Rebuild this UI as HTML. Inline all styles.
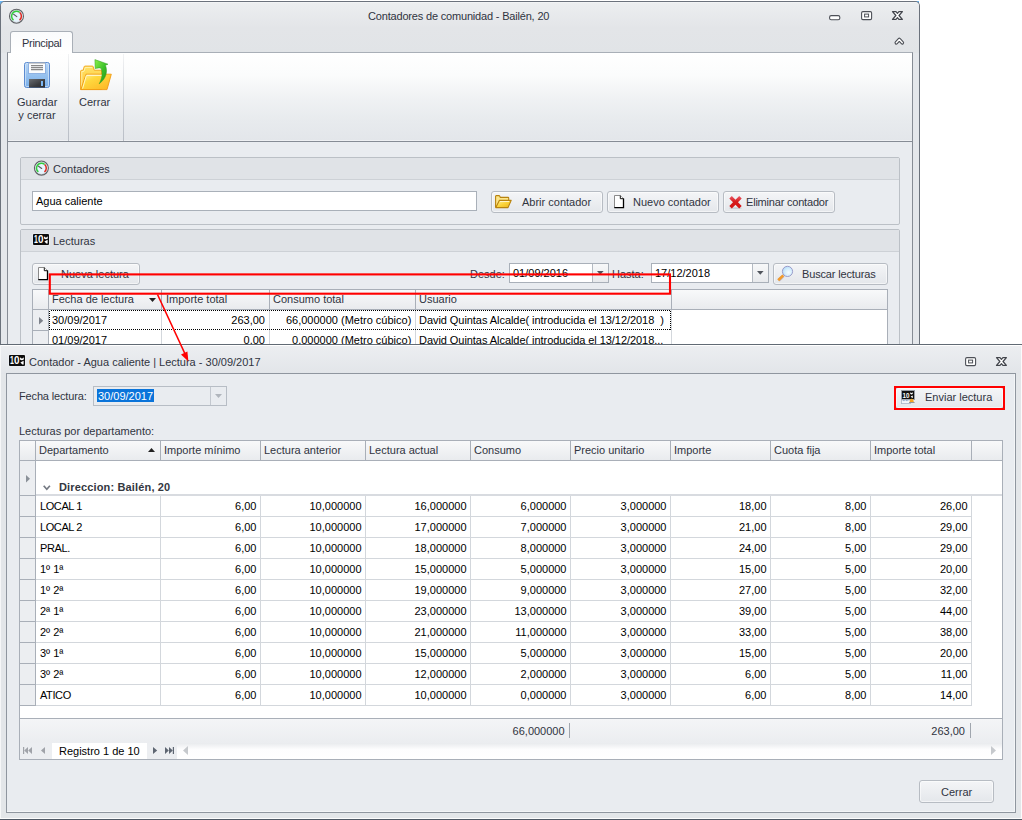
<!DOCTYPE html>
<html><head><meta charset="utf-8"><title>Contadores de comunidad</title>
<style>
*{box-sizing:border-box;margin:0;padding:0}
html,body{width:1022px;height:820px;overflow:hidden;background:#fff}
body{position:relative;font-family:"Liberation Sans",sans-serif;font-size:11px;color:#30343f;line-height:13px}
.a{position:absolute}
.t{position:absolute;white-space:pre;line-height:13px;height:13px}
.blk{color:#000}
.btn{position:absolute;border:1px solid #b7bcc3;border-radius:3px;background:linear-gradient(#f4f5f7,#e4e7eb);box-shadow:inset 0 0 0 1px rgba(255,255,255,.55)}
.inp{position:absolute;border:1px solid #a9b0b9;background:#fff}
.grp{position:absolute;border:1px solid #bbc0c6;border-radius:2px;background:#e9ecf0}
.grph{position:absolute;left:0;right:0;top:0;height:22px;background:#e0e3e7;border-bottom:1px solid #cdd1d6}
.hdr{position:absolute;background:linear-gradient(#f8f9fa,#e9ebee)}
.vl{position:absolute;width:1px;background:#a9afb8}
.hl{position:absolute;height:1px;background:#a9afb8}
.cvl{position:absolute;width:1px;background:#d3d7dc}
.chl{position:absolute;height:1px;background:#d3d7dc}
svg{position:absolute;overflow:visible}
</style></head><body>

<div class="a" style="left:0;top:1px;width:4px;height:4px;background:#6cb5f2"></div><div class="a" style="left:915px;top:1px;width:4px;height:4px;background:#6cb5f2"></div>
<div id="win" class="a" style="left:0;top:1px;width:920px;height:360px;background:#e4e7eb;border:1px solid #6b727c;border-bottom:0;border-radius:5px 5px 0 0;overflow:hidden">
  <div class="a" style="left:0;top:0;width:918px;height:51px;background:linear-gradient(#f8f9fa 0,#eceef0 1px,#e3e5e8 26px,#e1e4e7 51px)"></div>
</div>
<div class="t" style="left:368px;top:10px;letter-spacing:-0.18px">Contadores de comunidad - Bailén, 20</div>
<div class="a" style="left:7px;top:52px;width:906px;height:90px;border:1px solid #868c95;border-top-color:#a9afb7;background:linear-gradient(#ffffff 0,#fbfcfc 25%,#f0f2f4 50%,#e8ebee 75%,#e3e6ea 100%);box-shadow:inset 0 -1px 0 #eef0f3"></div>
<div class="a" style="left:7px;top:141px;width:1px;height:210px;background:#868c95"></div>
<div class="a" style="left:912px;top:141px;width:1px;height:210px;background:#868c95"></div>
<div class="a" style="left:8px;top:142px;width:904px;height:210px;background:#e9ecf0"></div>
<div class="a" style="left:10px;top:31px;width:63px;height:22px;border:1px solid #a9afb7;border-bottom:0;border-radius:3px 3px 0 0;background:linear-gradient(#fafbfc,#ffffff)"></div>
<div class="t" style="left:22px;top:37px;letter-spacing:-0.3px">Principal</div>
<div class="a" style="left:68px;top:54px;width:1px;height:87px;background:linear-gradient(rgba(190,195,202,.2),#b9bec6)"></div>
<div class="a" style="left:123px;top:54px;width:1px;height:87px;background:linear-gradient(rgba(190,195,202,.2),#b9bec6)"></div>
<div class="t" style="left:17px;top:96px;width:40px;text-align:center;height:26px">Guardar
y cerrar</div>
<div class="t" style="left:79px;top:96px;">Cerrar</div>
<div class="grp" style="left:20px;top:157px;width:880px;height:68px"><div class="grph"></div></div>
<div class="t" style="left:53px;top:163px;">Contadores</div>
<div class="inp" style="left:32px;top:191px;width:445px;height:20px;"></div>
<div class="t blk" style="left:36px;top:195px;">Agua caliente</div>
<div class="btn" style="left:491px;top:191px;width:112px;height:22px;"></div>
<div class="t" style="left:522px;top:196px;">Abrir contador</div>
<div class="btn" style="left:607px;top:191px;width:112px;height:22px;"></div>
<div class="t" style="left:633px;top:196px;">Nuevo contador</div>
<div class="btn" style="left:723px;top:191px;width:112px;height:22px;"></div>
<div class="t" style="left:746px;top:196px;letter-spacing:-0.2px">Eliminar contador</div>
<div class="grp" style="left:20px;top:229px;width:880px;height:140px"><div class="grph"></div></div>
<div class="t" style="left:53px;top:235px;">Lecturas</div>
<div class="btn" style="left:32px;top:263px;width:108px;height:22px;"></div>
<div class="t" style="left:61px;top:268px;">Nueva lectura</div>
<div class="t" style="left:470px;top:268px;">Desde:</div>
<div class="inp" style="left:509px;top:263px;width:100px;height:20px;"></div>
<div class="t blk" style="left:513px;top:267px;">01/09/2016</div>
<div class="t" style="left:612px;top:268px;">Hasta:</div>
<div class="inp" style="left:651px;top:263px;width:118px;height:20px;"></div>
<div class="t blk" style="left:655px;top:267px;">17/12/2018</div>
<div class="btn" style="left:773px;top:263px;width:115px;height:22px;"></div>
<div class="t" style="left:802px;top:268px;letter-spacing:-0.15px">Buscar lecturas</div>
<div class="a" style="left:592px;top:264px;width:16px;height:18px;border-left:1px solid #b4bac2;background:linear-gradient(#f7f8f9,#e8eaed)"></div>
<svg style="left:597.2px;top:271.2px" width="8" height="5"><path d="M0 0h6.6l-3.3 3.8z" fill="#50545c"/></svg>
<div class="a" style="left:752px;top:264px;width:16px;height:18px;border-left:1px solid #b4bac2;background:linear-gradient(#f7f8f9,#e8eaed)"></div>
<svg style="left:757.2px;top:271.2px" width="8" height="5"><path d="M0 0h6.6l-3.3 3.8z" fill="#50545c"/></svg>
<div class="a" style="left:32px;top:289px;width:856px;height:70px;border:1px solid #a9afb8;background:#fff"></div>
<div class="hdr" style="left:33px;top:290px;width:854px;height:19px;"></div>
<div class="hl" style="left:33px;top:309px;width:854px;height:1px;"></div>
<div class="a" style="left:33px;top:310px;width:15px;height:50px;background:#eceef1"></div>
<div class="vl" style="left:48px;top:290px;width:1px;height:19px;"></div>
<div class="vl" style="left:161px;top:290px;width:1px;height:19px;"></div>
<div class="vl" style="left:269px;top:290px;width:1px;height:19px;"></div>
<div class="vl" style="left:415px;top:290px;width:1px;height:19px;"></div>
<div class="vl" style="left:671px;top:290px;width:1px;height:19px;"></div>
<div class="vl" style="left:48px;top:310px;width:1px;height:50px;"></div>
<div class="cvl" style="left:161px;top:310px;width:1px;height:50px;"></div>
<div class="cvl" style="left:269px;top:310px;width:1px;height:50px;"></div>
<div class="cvl" style="left:415px;top:310px;width:1px;height:50px;"></div>
<div class="cvl" style="left:671px;top:310px;width:1px;height:50px;"></div>
<div class="hl" style="left:33px;top:330px;width:15px;height:1px;"></div>
<div class="a" style="left:49px;top:310px;width:622px;height:1px;background:repeating-linear-gradient(90deg,#000 0,#000 1px,#fff 1px,#fff 2px)"></div>
<div class="a" style="left:49px;top:329px;width:622px;height:1px;background:repeating-linear-gradient(90deg,#000 0,#000 1px,#fff 1px,#fff 2px)"></div>
<div class="a" style="left:49px;top:310px;width:1px;height:20px;background:repeating-linear-gradient(0deg,#000 0,#000 1px,#fff 1px,#fff 2px)"></div>
<div class="a" style="left:670px;top:310px;width:1px;height:20px;background:repeating-linear-gradient(0deg,#000 0,#000 1px,#fff 1px,#fff 2px)"></div>
<div class="t" style="left:52px;top:293px;">Fecha de lectura</div>
<div class="t" style="left:166px;top:293px;">Importe total</div>
<div class="t" style="left:273px;top:293px;">Consumo total</div>
<div class="t" style="left:419px;top:293px;">Usuario</div>
<svg style="left:148.8px;top:298px" width="8" height="5"><path d="M0 0h7l-3.5 4z" fill="#222"/></svg>
<svg style="left:38.8px;top:316.8px" width="5" height="8"><path d="M0 0l4.2 3.7L0 7.4z" fill="#7d828b"/></svg>
<div class="t blk" style="left:52px;top:314px;">30/09/2017</div>
<div class="t blk" style="left:-35px;width:300px;text-align:right;top:314px;">263,00</div>
<div class="t blk" style="left:111.30000000000001px;width:300px;text-align:right;top:314px;">66,000000 (Metro cúbico)</div>
<div class="t blk" style="left:419px;top:314px;letter-spacing:-0.055px">David Quintas Alcalde( introducida el 13/12/2018  )</div>
<div class="t blk" style="left:52px;top:334px;">01/09/2017</div>
<div class="t blk" style="left:-35px;width:300px;text-align:right;top:334px;">0,00</div>
<div class="t blk" style="left:111.30000000000001px;width:300px;text-align:right;top:334px;">0,000000 (Metro cúbico)</div>
<div class="t blk" style="left:419px;top:334px;letter-spacing:-0.055px">David Quintas Alcalde( introducida el 13/12/2018...</div>
<svg style="left:0;top:0" width="1022" height="820"><circle cx="16.5" cy="16.2" r="7.6" fill="#f4f5f6" opacity=".6"/><circle cx="16.5" cy="16.2" r="6.9" fill="#e6f4fd" stroke="#5f6165" stroke-width="1.3"/><circle cx="16.5" cy="16.2" r="6" fill="none" stroke="#d8dde2" stroke-width=".7"/><path d="M13.48 20.06A4.9 4.9 0 1 1 19.78 12.56" fill="none" stroke="#33cc3c" stroke-width="1.5"/><path d="M19.78 12.56A4.9 4.9 0 0 1 19.52 20.06" fill="none" stroke="#e0281f" stroke-width="1.5"/><line x1="16.8" y1="16.599999999999998" x2="13.6" y2="14.299999999999999" stroke="#5a5c60" stroke-width="1.1" stroke-linecap="round"/></svg>
<svg style="left:0;top:0" width="1022" height="820"><circle cx="41.4" cy="168.1" r="7.6" fill="#f4f5f6" opacity=".6"/><circle cx="41.4" cy="168.1" r="6.9" fill="#e6f4fd" stroke="#5f6165" stroke-width="1.3"/><circle cx="41.4" cy="168.1" r="6" fill="none" stroke="#d8dde2" stroke-width=".7"/><path d="M38.38 171.96A4.9 4.9 0 1 1 44.68 164.46" fill="none" stroke="#33cc3c" stroke-width="1.5"/><path d="M44.68 164.46A4.9 4.9 0 0 1 44.42 171.96" fill="none" stroke="#e0281f" stroke-width="1.5"/><line x1="41.699999999999996" y1="168.5" x2="38.5" y2="166.2" stroke="#5a5c60" stroke-width="1.1" stroke-linecap="round"/></svg>
<svg style="left:24px;top:62px" width="26" height="26" viewBox="0 0 26 26"><defs><linearGradient id="fl1" x1="0" y1="0" x2="0" y2="1"><stop offset="0" stop-color="#b7d6f5"/><stop offset="1" stop-color="#78aee9"/></linearGradient><linearGradient id="fl2" x1="0" y1="0" x2="1" y2="1"><stop offset="0" stop-color="#6a6d72"/><stop offset=".6" stop-color="#3b3c3f"/><stop offset="1" stop-color="#2c2c2e"/></linearGradient></defs><rect x=".5" y=".5" width="25" height="25" rx="2" fill="url(#fl1)" stroke="#5c8bd0"/><rect x="1.5" y="1.5" width="23" height="23" rx="1.2" fill="none" stroke="#d5e7fa" stroke-opacity=".7"/><rect x="4.6" y=".6" width="16.8" height="11" fill="#fbfcfd" stroke="#7fa6dc" stroke-width=".8"/><rect x="5" y=".5" width="16" height="1" fill="#9c9da1"/><rect x="7" y="3.2" width="12" height="1" fill="#6b6b6b"/><rect x="7" y="5.2" width="12" height="1" fill="#6b6b6b"/><rect x="7" y="7.2" width="12" height="1" fill="#6b6b6b"/><rect x="5" y="17" width="16" height="8.6" fill="url(#fl2)"/><rect x="17" y="19" width="2" height="5" fill="#7cb7f3"/></svg>
<svg style="left:80px;top:59px" width="32" height="32" viewBox="0 0 32 32"><defs><linearGradient id="fa1" x1="0" y1="0" x2="0" y2="1"><stop offset="0" stop-color="#ffe36a"/><stop offset="1" stop-color="#ffc22e"/></linearGradient><linearGradient id="fa2" x1="0" y1="0" x2="1" y2="1"><stop offset="0" stop-color="#fff2a0"/><stop offset=".35" stop-color="#ffd83e"/><stop offset="1" stop-color="#fdb321"/></linearGradient><linearGradient id="fa3" x1="0" y1="0" x2="1" y2="1"><stop offset="0" stop-color="#8cf04a"/><stop offset=".5" stop-color="#3cc22a"/><stop offset="1" stop-color="#1f8a14"/></linearGradient></defs><path d="M0.6 30.5V12.2Q0.6 11.4 1.6 11.3L3.2 11.2L4.2 7.6Q4.4 7.1 5 7.1H12.4Q13 7.1 13.2 7.6L14.2 11.2H21.5V30.5z" fill="url(#fa1)" stroke="#f0a010" stroke-width=".9"/><path d="M1.8 29V12.5L4 12.3L5.2 8.4H12.2" fill="none" stroke="#fff6c0" stroke-width=".9" stroke-opacity=".9"/><path d="M6 15.2H31.3L27 30.6H0.8z" fill="url(#fa2)" stroke="#f19a12" stroke-width=".9"/><path d="M6.8 16.3H25" fill="none" stroke="#fffbe0" stroke-width="1"/><path d="M6.4 16.4L2.6 29.6" fill="none" stroke="#fff8d0" stroke-width=".9"/><path d="M14.9 0.6L28 5.2L25.4 6.3C27.6 11.5 27 19 19.2 24.8C21.5 20.5 23.4 14.5 21 9.3C19.6 8.5 17.3 9 15.2 9.6z" fill="url(#fa3)" stroke="#2a9a1c" stroke-width=".5"/></svg>
<svg style="left:494.5px;top:194.5px" width="17" height="14" viewBox="0 0 17 14"><defs><linearGradient id="fs1" x1="0" y1="0" x2="1" y2="1"><stop offset="0" stop-color="#fff0a0"/><stop offset=".5" stop-color="#fbd43a"/><stop offset="1" stop-color="#e9b21c"/></linearGradient></defs><path d="M0.6 12.4V1.3Q0.6 .6 1.3 .6H3.9Q4.5 .6 4.8 1.2L5.3 2.4H13Q13.7 2.4 13.7 3.1V5.2" fill="#fde68a" stroke="#b8830f" stroke-width="1.1"/><path d="M4.3 5.4H16.2L13 12.6H0.8z" fill="url(#fs1)" stroke="#b8830f" stroke-width="1.1" stroke-linejoin="round"/><path d="M5 6.5H14.2" stroke="#fff8d8" stroke-width=".9" fill="none"/></svg>
<svg style="left:614px;top:195px" width="11" height="14" viewBox="0 0 11 14"><path d="M0.5 0.5H6.5L9.5 3.5V12.5H0.5z" fill="#fff" stroke="#8a8a8a" stroke-width="1"/><path d="M6.3 0.6V3.7H9.4" fill="#fff" stroke="#111" stroke-width="1"/><path d="M9.5 3.5V12.6H0.3" fill="none" stroke="#000" stroke-width="1.3"/></svg>
<svg style="left:728.6px;top:195.6px" width="13" height="13" viewBox="0 0 13 13"><defs><linearGradient id="rx1" x1="0" y1="0" x2="0" y2="1"><stop offset="0" stop-color="#ea5a68"/><stop offset=".45" stop-color="#d61c1c"/><stop offset="1" stop-color="#d41414"/></linearGradient></defs><ellipse cx="6.5" cy="12.2" rx="6.5" ry=".9" fill="#b9bcc2" opacity=".6"/><path d="M2.8 0.1L6.5 3.8L10.2 0.1L12.7 2.6L9 6.3L12.7 10L10.2 12.4L6.5 8.8L2.8 12.4L0.3 10L4 6.3L0.3 2.6z" fill="url(#rx1)"/></svg>
<svg style="left:38px;top:267px" width="11" height="14" viewBox="0 0 11 14"><path d="M0.5 0.5H6.5L9.5 3.5V12.5H0.5z" fill="#fff" stroke="#8a8a8a" stroke-width="1"/><path d="M6.3 0.6V3.7H9.4" fill="#fff" stroke="#111" stroke-width="1"/><path d="M9.5 3.5V12.6H0.3" fill="none" stroke="#000" stroke-width="1.3"/></svg>
<svg style="left:777px;top:264px" width="18" height="18" viewBox="0 0 18 18"><defs><radialGradient id="mg1" cx=".6" cy=".6" r=".7"><stop offset="0" stop-color="#f4fcff"/><stop offset=".6" stop-color="#cdeafc"/><stop offset="1" stop-color="#a9d4f7"/></radialGradient></defs><path d="M6.5 11.6L1.6 16.4" stroke="#8a8fb0" stroke-width="3.4" stroke-linecap="butt" opacity=".45"/><path d="M6.3 11.4L1.2 16.2" stroke="#f39a2b" stroke-width="2.6" stroke-linecap="butt"/><circle cx="10.5" cy="7.4" r="5.1" fill="url(#mg1)" stroke="#9b9cca" stroke-width="1"/></svg>
<svg style="left:33px;top:234px" width="16" height="11" viewBox="0 0 16 11"><rect x="-.6" y="-.6" width="17.2" height="12.2" rx="1" fill="#f4f5f7" opacity=".7"/><rect x="0" y="0" width="16" height="11" rx="1" fill="#0c0c0c"/><text transform="translate(1.1,9.4) scale(.68,1)" font-family="Liberation Sans,sans-serif" font-weight="bold" font-size="10.3" fill="#fff">1</text><text transform="translate(4.9,9.4) scale(.96,1)" font-family="Liberation Sans,sans-serif" font-weight="bold" font-size="10.3" fill="#fff">0</text><path d="M11 2.2Q12.9 4.6 14.8 2.2V4.6Q12.9 6 11 4.6z" fill="#fff"/><path d="M11.4 7.6L14.6 5.8V9.6L13.4 9.4z" fill="#fff"/></svg>
<svg style="left:0;top:0" width="1022" height="60"><rect x="829.6" y="15.6" width="10.2" height="4.2" rx="1.6" fill="#fff" stroke="#4d5057" stroke-width="1.1"/><rect x="861.6" y="11.6" width="10" height="8" rx="1.3" fill="#fff" stroke="#4d5057" stroke-width="1.1"/><rect x="864.6" y="14.1" width="4" height="2.8" fill="#fff" stroke="#4d5057" stroke-width="1"/><path d="M892.5 11.6H896L897.45 13.3L898.9 11.6H902.4L899 15.5L902.4 19.4H898.9L897.45 17.7L896 19.4H892.5L895.9 15.5z" fill="#fff" stroke="#43464d" stroke-width="1.25" stroke-linejoin="round"/><path d="M896.3 42.8L899.3 39.5L902.3 42.8" fill="none" stroke="#4d5057" stroke-width="3.6" stroke-linecap="round" stroke-linejoin="round"/><path d="M896.3 42.8L899.3 39.5L902.3 42.8" fill="none" stroke="#fff" stroke-width="1.4" stroke-linecap="round" stroke-linejoin="round"/></svg>
<div id="dlg" class="a" style="left:0;top:344px;width:1022px;height:476px;background:#e3e6e9;border-top:1px solid #616a74;border-bottom:1px solid #4e5864">
  <div class="a" style="left:0;top:0;width:1022px;height:29px;background:linear-gradient(#ffffff 0,#ffffff 1px,#eceef1 1px,#e2e5e9)"></div>
  <div class="a" style="left:0;top:0;width:1px;height:474px;background:#f6f7f8"></div>
  <div class="a" style="left:1021px;top:0;width:1px;height:474px;background:#fbfbfc"></div>
  <div class="a" style="left:0;top:473px;width:1022px;height:1px;background:#fdfdfd"></div>
  <div class="a" style="left:6px;top:28px;width:1010px;height:440px;border:1px solid #8f969f;background:#e9ecf0;box-shadow:inset -1px -1px 0 #f3f5f7"></div>
</div>
<div class="t" style="left:29px;top:356px;">Contador - Agua caliente | Lectura - 30/09/2017</div>
<div class="t" style="left:19px;top:390px;letter-spacing:-0.15px">Fecha lectura:</div>
<div class="a" style="left:93px;top:386px;width:134px;height:20px;border:1px solid #b7bdc5;background:#e9ecf0"></div>
<div class="a" style="left:210px;top:387px;width:1px;height:18px;background:#c3c8cf"></div>
<div class="a" style="left:97px;top:389px;width:57px;height:13px;background:#0a74da"></div>
<div class="t" style="left:98px;top:390px;color:#fff">30/09/2017</div>
<svg style="left:214.5px;top:394px" width="8" height="5"><path d="M0 0h7l-3.5 4z" fill="#b0b5bc"/></svg>
<div class="t" style="left:19px;top:425px;">Lecturas por departamento:</div>
<div class="btn" style="left:895px;top:387px;width:109px;height:22px;"></div>
<div class="t" style="left:925px;top:391px;">Enviar lectura</div>
<svg style="left:0;top:0" width="1022" height="820"><rect x="895" y="387" width="109" height="22" fill="none" stroke="#f00" stroke-width="2"/></svg>
<div class="btn" style="left:919px;top:780px;width:75px;height:23px;"></div>
<div class="t" style="left:941px;top:786px;">Cerrar</div>
<div class="a" style="left:19px;top:440px;width:984px;height:320px;border:1px solid #a9afb8;background:#fff"></div>
<div class="hdr" style="left:20px;top:441px;width:982px;height:19px;"></div>
<div class="hl" style="left:20px;top:460px;width:982px;height:1px;"></div>
<div class="vl" style="left:35px;top:441px;width:1px;height:19px;"></div>
<div class="vl" style="left:160px;top:441px;width:1px;height:19px;"></div>
<div class="vl" style="left:260px;top:441px;width:1px;height:19px;"></div>
<div class="vl" style="left:365px;top:441px;width:1px;height:19px;"></div>
<div class="vl" style="left:470px;top:441px;width:1px;height:19px;"></div>
<div class="vl" style="left:570px;top:441px;width:1px;height:19px;"></div>
<div class="vl" style="left:670px;top:441px;width:1px;height:19px;"></div>
<div class="vl" style="left:770px;top:441px;width:1px;height:19px;"></div>
<div class="vl" style="left:870px;top:441px;width:1px;height:19px;"></div>
<div class="vl" style="left:971px;top:441px;width:1px;height:19px;"></div>
<div class="t" style="left:39px;top:444px;">Departamento</div>
<div class="t" style="left:164px;top:444px;">Importe mínimo</div>
<div class="t" style="left:264px;top:444px;">Lectura anterior</div>
<div class="t" style="left:369px;top:444px;">Lectura actual</div>
<div class="t" style="left:474px;top:444px;">Consumo</div>
<div class="t" style="left:574px;top:444px;">Precio unitario</div>
<div class="t" style="left:674px;top:444px;">Importe</div>
<div class="t" style="left:774px;top:444px;">Cuota fija</div>
<div class="t" style="left:874px;top:444px;">Importe total</div>
<svg style="left:148px;top:448px" width="8" height="5"><path d="M0 4h7l-3.5 -4z" fill="#222"/></svg>
<div class="a" style="left:20px;top:461px;width:15px;height:245px;background:#eceef1"></div>
<div class="vl" style="left:35px;top:461px;width:1px;height:245px;"></div>
<div class="t" style="left:59px;top:481px;font-weight:bold;color:#33373f;letter-spacing:0.15px">Direccion: Bailén, 20</div>
<svg style="left:43px;top:485px" width="8" height="6"><path d="M0.7 0.7L3.8 4.2L6.9 0.7" fill="none" stroke="#747982" stroke-width="1.7"/></svg>
<svg style="left:26px;top:475px" width="5" height="8"><path d="M0 0l4 3.8L0 7.6z" fill="#8a9098"/></svg>
<div class="a" style="left:36px;top:494px;width:966px;height:2px;background:#d8dbe0"></div>
<div class="hl" style="left:20px;top:495px;width:15px;height:1px;"></div>
<div class="chl" style="left:36px;top:516px;width:936px;height:1px;"></div>
<div class="hl" style="left:20px;top:516px;width:15px;height:1px;"></div>
<div class="t blk" style="left:40px;top:500px;letter-spacing:-0.4px">LOCAL 1</div>
<div class="t blk" style="left:-43.5px;width:300px;text-align:right;top:500px;">6,00</div>
<div class="t blk" style="left:61.5px;width:300px;text-align:right;top:500px;">10,000000</div>
<div class="t blk" style="left:166.5px;width:300px;text-align:right;top:500px;">16,000000</div>
<div class="t blk" style="left:266.5px;width:300px;text-align:right;top:500px;">6,000000</div>
<div class="t blk" style="left:366.5px;width:300px;text-align:right;top:500px;">3,000000</div>
<div class="t blk" style="left:466.5px;width:300px;text-align:right;top:500px;">18,00</div>
<div class="t blk" style="left:566.5px;width:300px;text-align:right;top:500px;">8,00</div>
<div class="t blk" style="left:667.5px;width:300px;text-align:right;top:500px;">26,00</div>
<div class="chl" style="left:36px;top:537px;width:936px;height:1px;"></div>
<div class="hl" style="left:20px;top:537px;width:15px;height:1px;"></div>
<div class="t blk" style="left:40px;top:521px;letter-spacing:-0.4px">LOCAL 2</div>
<div class="t blk" style="left:-43.5px;width:300px;text-align:right;top:521px;">6,00</div>
<div class="t blk" style="left:61.5px;width:300px;text-align:right;top:521px;">10,000000</div>
<div class="t blk" style="left:166.5px;width:300px;text-align:right;top:521px;">17,000000</div>
<div class="t blk" style="left:266.5px;width:300px;text-align:right;top:521px;">7,000000</div>
<div class="t blk" style="left:366.5px;width:300px;text-align:right;top:521px;">3,000000</div>
<div class="t blk" style="left:466.5px;width:300px;text-align:right;top:521px;">21,00</div>
<div class="t blk" style="left:566.5px;width:300px;text-align:right;top:521px;">8,00</div>
<div class="t blk" style="left:667.5px;width:300px;text-align:right;top:521px;">29,00</div>
<div class="chl" style="left:36px;top:558px;width:936px;height:1px;"></div>
<div class="hl" style="left:20px;top:558px;width:15px;height:1px;"></div>
<div class="t blk" style="left:40px;top:542px;letter-spacing:-0.4px">PRAL.</div>
<div class="t blk" style="left:-43.5px;width:300px;text-align:right;top:542px;">6,00</div>
<div class="t blk" style="left:61.5px;width:300px;text-align:right;top:542px;">10,000000</div>
<div class="t blk" style="left:166.5px;width:300px;text-align:right;top:542px;">18,000000</div>
<div class="t blk" style="left:266.5px;width:300px;text-align:right;top:542px;">8,000000</div>
<div class="t blk" style="left:366.5px;width:300px;text-align:right;top:542px;">3,000000</div>
<div class="t blk" style="left:466.5px;width:300px;text-align:right;top:542px;">24,00</div>
<div class="t blk" style="left:566.5px;width:300px;text-align:right;top:542px;">5,00</div>
<div class="t blk" style="left:667.5px;width:300px;text-align:right;top:542px;">29,00</div>
<div class="chl" style="left:36px;top:579px;width:936px;height:1px;"></div>
<div class="hl" style="left:20px;top:579px;width:15px;height:1px;"></div>
<div class="t blk" style="left:40px;top:563px;">1º 1ª</div>
<div class="t blk" style="left:-43.5px;width:300px;text-align:right;top:563px;">6,00</div>
<div class="t blk" style="left:61.5px;width:300px;text-align:right;top:563px;">10,000000</div>
<div class="t blk" style="left:166.5px;width:300px;text-align:right;top:563px;">15,000000</div>
<div class="t blk" style="left:266.5px;width:300px;text-align:right;top:563px;">5,000000</div>
<div class="t blk" style="left:366.5px;width:300px;text-align:right;top:563px;">3,000000</div>
<div class="t blk" style="left:466.5px;width:300px;text-align:right;top:563px;">15,00</div>
<div class="t blk" style="left:566.5px;width:300px;text-align:right;top:563px;">5,00</div>
<div class="t blk" style="left:667.5px;width:300px;text-align:right;top:563px;">20,00</div>
<div class="chl" style="left:36px;top:600px;width:936px;height:1px;"></div>
<div class="hl" style="left:20px;top:600px;width:15px;height:1px;"></div>
<div class="t blk" style="left:40px;top:584px;">1º 2ª</div>
<div class="t blk" style="left:-43.5px;width:300px;text-align:right;top:584px;">6,00</div>
<div class="t blk" style="left:61.5px;width:300px;text-align:right;top:584px;">10,000000</div>
<div class="t blk" style="left:166.5px;width:300px;text-align:right;top:584px;">19,000000</div>
<div class="t blk" style="left:266.5px;width:300px;text-align:right;top:584px;">9,000000</div>
<div class="t blk" style="left:366.5px;width:300px;text-align:right;top:584px;">3,000000</div>
<div class="t blk" style="left:466.5px;width:300px;text-align:right;top:584px;">27,00</div>
<div class="t blk" style="left:566.5px;width:300px;text-align:right;top:584px;">5,00</div>
<div class="t blk" style="left:667.5px;width:300px;text-align:right;top:584px;">32,00</div>
<div class="chl" style="left:36px;top:621px;width:936px;height:1px;"></div>
<div class="hl" style="left:20px;top:621px;width:15px;height:1px;"></div>
<div class="t blk" style="left:40px;top:605px;">2ª 1ª</div>
<div class="t blk" style="left:-43.5px;width:300px;text-align:right;top:605px;">6,00</div>
<div class="t blk" style="left:61.5px;width:300px;text-align:right;top:605px;">10,000000</div>
<div class="t blk" style="left:166.5px;width:300px;text-align:right;top:605px;">23,000000</div>
<div class="t blk" style="left:266.5px;width:300px;text-align:right;top:605px;">13,000000</div>
<div class="t blk" style="left:366.5px;width:300px;text-align:right;top:605px;">3,000000</div>
<div class="t blk" style="left:466.5px;width:300px;text-align:right;top:605px;">39,00</div>
<div class="t blk" style="left:566.5px;width:300px;text-align:right;top:605px;">5,00</div>
<div class="t blk" style="left:667.5px;width:300px;text-align:right;top:605px;">44,00</div>
<div class="chl" style="left:36px;top:642px;width:936px;height:1px;"></div>
<div class="hl" style="left:20px;top:642px;width:15px;height:1px;"></div>
<div class="t blk" style="left:40px;top:626px;">2º 2ª</div>
<div class="t blk" style="left:-43.5px;width:300px;text-align:right;top:626px;">6,00</div>
<div class="t blk" style="left:61.5px;width:300px;text-align:right;top:626px;">10,000000</div>
<div class="t blk" style="left:166.5px;width:300px;text-align:right;top:626px;">21,000000</div>
<div class="t blk" style="left:266.5px;width:300px;text-align:right;top:626px;">11,000000</div>
<div class="t blk" style="left:366.5px;width:300px;text-align:right;top:626px;">3,000000</div>
<div class="t blk" style="left:466.5px;width:300px;text-align:right;top:626px;">33,00</div>
<div class="t blk" style="left:566.5px;width:300px;text-align:right;top:626px;">5,00</div>
<div class="t blk" style="left:667.5px;width:300px;text-align:right;top:626px;">38,00</div>
<div class="chl" style="left:36px;top:663px;width:936px;height:1px;"></div>
<div class="hl" style="left:20px;top:663px;width:15px;height:1px;"></div>
<div class="t blk" style="left:40px;top:647px;">3º 1ª</div>
<div class="t blk" style="left:-43.5px;width:300px;text-align:right;top:647px;">6,00</div>
<div class="t blk" style="left:61.5px;width:300px;text-align:right;top:647px;">10,000000</div>
<div class="t blk" style="left:166.5px;width:300px;text-align:right;top:647px;">15,000000</div>
<div class="t blk" style="left:266.5px;width:300px;text-align:right;top:647px;">5,000000</div>
<div class="t blk" style="left:366.5px;width:300px;text-align:right;top:647px;">3,000000</div>
<div class="t blk" style="left:466.5px;width:300px;text-align:right;top:647px;">15,00</div>
<div class="t blk" style="left:566.5px;width:300px;text-align:right;top:647px;">5,00</div>
<div class="t blk" style="left:667.5px;width:300px;text-align:right;top:647px;">20,00</div>
<div class="chl" style="left:36px;top:684px;width:936px;height:1px;"></div>
<div class="hl" style="left:20px;top:684px;width:15px;height:1px;"></div>
<div class="t blk" style="left:40px;top:668px;">3º 2ª</div>
<div class="t blk" style="left:-43.5px;width:300px;text-align:right;top:668px;">6,00</div>
<div class="t blk" style="left:61.5px;width:300px;text-align:right;top:668px;">10,000000</div>
<div class="t blk" style="left:166.5px;width:300px;text-align:right;top:668px;">12,000000</div>
<div class="t blk" style="left:266.5px;width:300px;text-align:right;top:668px;">2,000000</div>
<div class="t blk" style="left:366.5px;width:300px;text-align:right;top:668px;">3,000000</div>
<div class="t blk" style="left:466.5px;width:300px;text-align:right;top:668px;">6,00</div>
<div class="t blk" style="left:566.5px;width:300px;text-align:right;top:668px;">5,00</div>
<div class="t blk" style="left:667.5px;width:300px;text-align:right;top:668px;">11,00</div>
<div class="chl" style="left:36px;top:705px;width:936px;height:1px;"></div>
<div class="hl" style="left:20px;top:705px;width:15px;height:1px;"></div>
<div class="t blk" style="left:40px;top:689px;letter-spacing:-0.4px">ATICO</div>
<div class="t blk" style="left:-43.5px;width:300px;text-align:right;top:689px;">6,00</div>
<div class="t blk" style="left:61.5px;width:300px;text-align:right;top:689px;">10,000000</div>
<div class="t blk" style="left:166.5px;width:300px;text-align:right;top:689px;">10,000000</div>
<div class="t blk" style="left:266.5px;width:300px;text-align:right;top:689px;">0,000000</div>
<div class="t blk" style="left:366.5px;width:300px;text-align:right;top:689px;">3,000000</div>
<div class="t blk" style="left:466.5px;width:300px;text-align:right;top:689px;">6,00</div>
<div class="t blk" style="left:566.5px;width:300px;text-align:right;top:689px;">8,00</div>
<div class="t blk" style="left:667.5px;width:300px;text-align:right;top:689px;">14,00</div>
<div class="cvl" style="left:160px;top:496px;width:1px;height:210px;"></div>
<div class="cvl" style="left:260px;top:496px;width:1px;height:210px;"></div>
<div class="cvl" style="left:365px;top:496px;width:1px;height:210px;"></div>
<div class="cvl" style="left:470px;top:496px;width:1px;height:210px;"></div>
<div class="cvl" style="left:570px;top:496px;width:1px;height:210px;"></div>
<div class="cvl" style="left:670px;top:496px;width:1px;height:210px;"></div>
<div class="cvl" style="left:770px;top:496px;width:1px;height:210px;"></div>
<div class="cvl" style="left:870px;top:496px;width:1px;height:210px;"></div>
<div class="cvl" style="left:971px;top:496px;width:1px;height:210px;"></div>
<div class="hl" style="left:20px;top:718px;width:982px;height:1px;"></div>
<div class="a" style="left:20px;top:719px;width:982px;height:24px;background:linear-gradient(#f4f5f7,#ebedf0)"></div>
<div class="t" style="left:264.6px;width:300px;text-align:right;top:725px;">66,000000</div>
<div class="t" style="left:665px;width:300px;text-align:right;top:725px;">263,00</div>
<div class="a" style="left:569px;top:723px;width:1px;height:15px;background:#a0a6ae"></div>
<div class="a" style="left:970px;top:723px;width:1px;height:15px;background:#a0a6ae"></div>
<div class="a" style="left:20px;top:743px;width:982px;height:16px;background:linear-gradient(#e9ebee,#fdfdfe 40%,#ffffff)"></div>
<div class="a" style="left:20px;top:743px;width:157px;height:16px;background:#eceef1"></div>
<div class="a" style="left:52px;top:743px;width:95px;height:16px;background:#fff"></div>
<div class="t blk" style="left:59px;top:745px;">Registro 1 de 10</div>
<svg style="left:9px;top:355px" width="16" height="11" viewBox="0 0 16 11"><rect x="-.6" y="-.6" width="17.2" height="12.2" rx="1" fill="#f4f5f7" opacity=".7"/><rect x="0" y="0" width="16" height="11" rx="1" fill="#0c0c0c"/><text transform="translate(1.1,9.4) scale(.68,1)" font-family="Liberation Sans,sans-serif" font-weight="bold" font-size="10.3" fill="#fff">1</text><text transform="translate(4.9,9.4) scale(.96,1)" font-family="Liberation Sans,sans-serif" font-weight="bold" font-size="10.3" fill="#fff">0</text><path d="M11 2.2Q12.9 4.6 14.8 2.2V4.6Q12.9 6 11 4.6z" fill="#fff"/><path d="M11.4 7.6L14.6 5.8V9.6L13.4 9.4z" fill="#fff"/></svg>
<svg style="left:901px;top:390px" width="15" height="15" viewBox="0 0 15 15"><rect x=".5" y=".5" width="13" height="9" fill="#111" stroke="#9aa0a8" stroke-width="1"/><text x="1.4" y="7.8" font-family="Liberation Sans,sans-serif" font-weight="bold" font-size="7" fill="#fff" textLength="7" lengthAdjust="spacingAndGlyphs">10</text><path d="M9.2 2.2Q10.5 3.8 11.8 2.2V3.8Q10.5 5 9.2 3.8zM9.6 6.6L11.8 5.4V8L11 7.8z" fill="#fff"/><rect x=".5" y="10" width="9" height="3.6" fill="#f2f6fb" stroke="#a9b6c8" stroke-width=".8"/><path d="M2 10.6h1.6M5 10.6h1.6" stroke="#7f9cc6" stroke-width=".8"/><path d="M8.6 12.2Q8.8 9 10.7 8.8Q12.6 9 12.8 12.2z" fill="#f5a623"/><path d="M8 12.5H13.6" stroke="#8a8f96" stroke-width=".9"/></svg>
<svg style="left:0;top:0" width="1022" height="820"><rect x="965.6" y="357.6" width="10" height="8" rx="1.3" fill="#fff" stroke="#4d5057" stroke-width="1.1"/><rect x="968.6" y="360.1" width="4" height="2.8" fill="#fff" stroke="#4d5057" stroke-width="1"/><path transform="translate(104,346)" d="M892.5 11.6H896L897.45 13.3L898.9 11.6H902.4L899 15.5L902.4 19.4H898.9L897.45 17.7L896 19.4H892.5L895.9 15.5z" fill="#fff" stroke="#43464d" stroke-width="1.25" stroke-linejoin="round"/><g fill="#a0a3a9"><rect x="23" y="747" width="1.2" height="7"/><path d="M28 747v7l-3.8-3.5zM32 747v7l-3.8-3.5z"/><path d="M45 747v7l-4-3.5z"/></g><g fill="#5e6672"><path d="M153 747v7l4.2-3.5z"/><path d="M165 747v7l3.8-3.5zM169 747v7l3.8-3.5z"/><rect x="172.8" y="747" width="1.2" height="7"/></g><path d="M188 746v9l-5-4.5z" fill="#c6c9cd"/><path d="M991 746v9l5-4.5z" fill="#c6c9cd"/></svg>
<svg style="left:0;top:0" width="1022" height="820"><rect x="49.8" y="274.4" width="620.2" height="19.3" fill="none" stroke="#f00" stroke-width="2.1"/><line x1="157.5" y1="294.5" x2="186" y2="356" stroke="#f00" stroke-width="1.6"/><path d="M188.4 361.6L181 354.6L187.4 351.4z" fill="#f00"/></svg>
</body></html>
